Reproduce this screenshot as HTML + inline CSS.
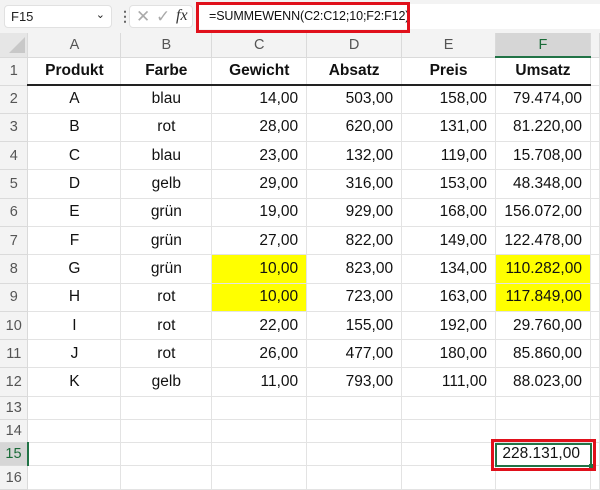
<!DOCTYPE html>
<html><head><meta charset="utf-8"><style>
*{margin:0;padding:0;box-sizing:border-box}
body{width:600px;height:490px;overflow:hidden;background:#fff;font-family:"Liberation Sans",sans-serif;position:relative}
.top{position:absolute;left:0;top:0;width:600px;height:33px;background:#f3f3f3}
.nb{position:absolute;left:4px;top:5px;width:108px;height:23px;background:#fff;border:1px solid #e1e1e1;border-radius:4px;font-size:13px;padding:3px 0 0 6px;color:#222}
.fx{position:absolute;left:129px;top:5px;width:64px;height:23px;background:#fff;border:1px solid #e1e1e1;border-radius:4px;color:#aaa;font-size:15px}
.fb{position:absolute;left:197px;top:4px;width:403px;height:25px;background:#fff}
.red{position:absolute;border:3px solid #e0101b}
table{position:absolute;left:0;top:33px;border-collapse:collapse;table-layout:fixed}
td{border-right:1px solid #e3e3e3;border-bottom:1px solid #e3e3e3;font-size:15.5px;color:#111;white-space:nowrap;overflow:hidden}
td.h{background:#f3f3f3;color:#555;text-align:center;font-size:14.5px;border-color:#dadada}
td.r{background:#f3f3f3;color:#555;text-align:center;font-size:14.5px;border-color:#dadada}
.c{text-align:center}.n{text-align:right;padding-right:8px}
.b{font-weight:bold;text-align:center;border-bottom:2px solid #222}
.y{background:#ffff00}
</style></head><body>
<div class="top"></div>
<div class="nb">F15<span style="position:absolute;right:6px;top:2px;font-size:11px">&#8964;</span></div>
<div style="position:absolute;left:118px;top:8px;color:#666;font-size:14px;font-weight:bold">&#8942;</div>
<div class="fx"><span style="position:absolute;left:6px;top:1px;font-size:17px">&#10005;</span><span style="position:absolute;left:26px;top:1px;font-size:17px">&#10003;</span><span style="position:absolute;left:46px;top:1px;color:#333;font-family:'Liberation Serif',serif;font-style:italic;font-size:16px">fx</span></div>
<div class="fb"></div>
<div style="position:absolute;left:209px;top:9px;font-size:12.5px;color:#111;letter-spacing:-0.1px">=SUMMEWENN(C2:C12;10;F2:F12)</div>
<div class="red" style="left:196px;top:2px;width:214px;height:31px"></div>
<table>
<colgroup><col style="width:28px"><col style="width:93px"><col style="width:91px"><col style="width:95px"><col style="width:95px"><col style="width:94px"><col style="width:95px"><col style="width:9px"></colgroup>
<tr style="height:24px"><td class="h" style="background:#e6e6e6"><div style="width:0;height:0;border-left:16px solid transparent;border-bottom:16px solid #c8c8c8;margin-left:9px"></div></td><td class="h">A</td><td class="h">B</td><td class="h">C</td><td class="h">D</td><td class="h">E</td><td class="h" style="background:#d6d6d6;color:#1a6b38;border-bottom:2px solid #217346">F</td><td class="h"></td></tr>
<tr style="height:28px"><td class="r">1</td><td class="b">Produkt</td><td class="b">Farbe</td><td class="b">Gewicht</td><td class="b">Absatz</td><td class="b">Preis</td><td class="b">Umsatz</td><td></td></tr>
<tr style="height:28.3px"><td class="r">2</td><td class="c">A</td><td class="c">blau</td><td class="n">14,00</td><td class="n">503,00</td><td class="n">158,00</td><td class="n">79.474,00</td><td></td></tr>
<tr style="height:28.3px"><td class="r">3</td><td class="c">B</td><td class="c">rot</td><td class="n">28,00</td><td class="n">620,00</td><td class="n">131,00</td><td class="n">81.220,00</td><td></td></tr>
<tr style="height:28.3px"><td class="r">4</td><td class="c">C</td><td class="c">blau</td><td class="n">23,00</td><td class="n">132,00</td><td class="n">119,00</td><td class="n">15.708,00</td><td></td></tr>
<tr style="height:28.3px"><td class="r">5</td><td class="c">D</td><td class="c">gelb</td><td class="n">29,00</td><td class="n">316,00</td><td class="n">153,00</td><td class="n">48.348,00</td><td></td></tr>
<tr style="height:28.3px"><td class="r">6</td><td class="c">E</td><td class="c">grün</td><td class="n">19,00</td><td class="n">929,00</td><td class="n">168,00</td><td class="n">156.072,00</td><td></td></tr>
<tr style="height:28.3px"><td class="r">7</td><td class="c">F</td><td class="c">grün</td><td class="n">27,00</td><td class="n">822,00</td><td class="n">149,00</td><td class="n">122.478,00</td><td></td></tr>
<tr style="height:28.3px"><td class="r">8</td><td class="c">G</td><td class="c">grün</td><td class="n y">10,00</td><td class="n">823,00</td><td class="n">134,00</td><td class="n y">110.282,00</td><td></td></tr>
<tr style="height:28.3px"><td class="r">9</td><td class="c">H</td><td class="c">rot</td><td class="n y">10,00</td><td class="n">723,00</td><td class="n">163,00</td><td class="n y">117.849,00</td><td></td></tr>
<tr style="height:28.3px"><td class="r">10</td><td class="c">I</td><td class="c">rot</td><td class="n">22,00</td><td class="n">155,00</td><td class="n">192,00</td><td class="n">29.760,00</td><td></td></tr>
<tr style="height:28.3px"><td class="r">11</td><td class="c">J</td><td class="c">rot</td><td class="n">26,00</td><td class="n">477,00</td><td class="n">180,00</td><td class="n">85.860,00</td><td></td></tr>
<tr style="height:28.3px"><td class="r">12</td><td class="c">K</td><td class="c">gelb</td><td class="n">11,00</td><td class="n">793,00</td><td class="n">111,00</td><td class="n">88.023,00</td><td></td></tr>
<tr style="height:23px"><td class="r">13</td><td></td><td></td><td></td><td></td><td></td><td></td><td></td></tr>
<tr style="height:23px"><td class="r">14</td><td></td><td></td><td></td><td></td><td></td><td></td><td></td></tr>
<tr style="height:23.5px"><td class="r" style="background:#d6d6d6;color:#1a6b38;border-right:2px solid #217346">15</td><td></td><td></td><td></td><td></td><td></td><td class="n" style="padding-right:10px">228.131,00</td><td></td></tr>
<tr style="height:24px"><td class="r">16</td><td></td><td></td><td></td><td></td><td></td><td></td><td></td></tr>
</table>
<div style="position:absolute;left:495px;top:443px;width:97px;height:24px;border:2px solid #217346"></div>
<div style="position:absolute;left:589px;top:464px;width:5px;height:5px;background:#217346"></div>
<div class="red" style="left:491px;top:439px;width:105px;height:32px"></div>
</body></html>
